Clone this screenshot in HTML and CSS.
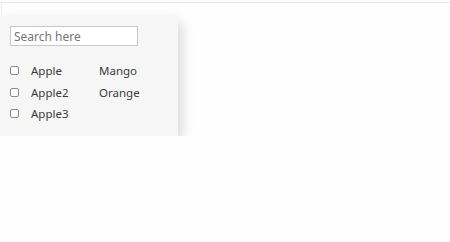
FILE: index.html
```html
<!DOCTYPE html>
<html lang="en">
<head>
  <meta charset="UTF-8" />
  <meta name="viewport" content="width=device-width, initial-scale=1.0" />
  <title>Search dropdown</title>
  <link rel="stylesheet" href="styles.css">
</head>
<body>
  <div class="topbar"></div>
  <div class="stage">
    <span class="edge"></span>
    <div class="dropdown">
      <input class="search" type="text" placeholder="Search here">
      <div class="options">
        <label class="option"><input type="checkbox">Apple</label>
        <label class="option"><input type="checkbox">Apple2</label>
        <label class="option"><input type="checkbox">Apple3</label>
        <label class="option">Mango</label>
        <label class="option">Orange</label>
      </div>
    </div>
  </div>
</body>
</html>
```

FILE: styles.css
```css
body {
  margin: 0;
  font-family: "Noto Sans", "Open Sans", sans-serif;
  background-color: #fefefe;
  color: #333;
}
.topbar {
  height: 2px;
  border-bottom: 1px solid #e8e8e8;
  background-color: #fff;
}
.stage {
  position: relative;
  padding-top: 13px;
}
.edge {
  position: absolute;
  left: 1px;
  top: 0;
  width: 1px;
  height: 13px;
  background-color: #ededed;
}
.dropdown {
  width: 178px;
  height: 120px;
  box-sizing: border-box;
  padding: 10px 0 0 10px;
  background-color: #f6f6f6;
  box-shadow: 3px 6px 12px rgba(0, 0, 0, 0.17);
}
.search {
  display: block;
  width: 128px;
  height: 20px;
  box-sizing: border-box;
  margin: 0;
  padding: 0 3px;
  border: 1px solid #c8c8c8;
  border-radius: 0;
  background-color: #fff;
  font-family: inherit;
  font-size: 12px;
  color: #333;
  outline: none;
}
.search::placeholder {
  color: #767676;
}
.options {
  display: grid;
  grid-template-rows: repeat(3, 21.5px);
  grid-auto-flow: column;
  grid-template-columns: 89px 70px;
  margin-top: 14px;
}
.option {
  display: flex;
  align-items: center;
  font-size: 11.5px;
  color: #3a3a3a;
}
.option input {
  appearance: none;
  width: 9px;
  height: 9px;
  margin: 0 12px 0 0;
  border: 1px solid #8c8c8c;
  border-radius: 2px;
  background-color: #fff;
}
```
